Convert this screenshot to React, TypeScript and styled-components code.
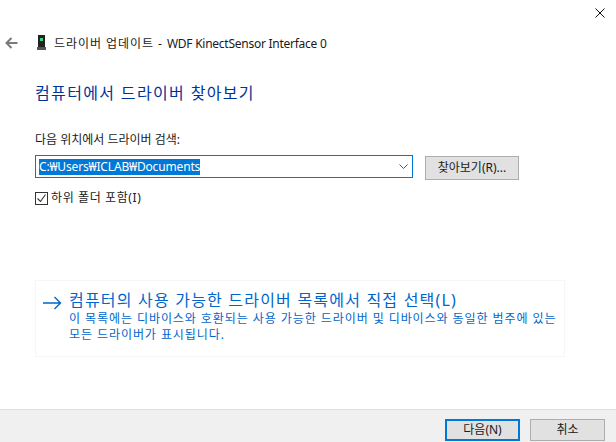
import React from "react";
import styled, { createGlobalStyle } from "styled-components";

const Global = createGlobalStyle`
  html, body { margin: 0; padding: 0; background: #fff; }
  body { font-family: "Noto Sans", "Noto Sans CJK KR", sans-serif; }
`;
const Win = styled.div`
  width: 616px; height: 442px; display: flex; flex-direction: column; background: #fff; overflow: hidden;
`;
const TopBar = styled.div`
  height: 30px; display: flex; justify-content: flex-end; align-items: flex-start; padding: 8px 11px 0 0; box-sizing: border-box;
`;
const Header = styled.div`
  height: 25px; display: flex; align-items: center; padding-left: 5px;
`;
const DeviceWrap = styled.span`
  display: flex; margin-left: 19px; margin-right: 8px;
`;
const WinTitle = styled.span`
  font-size: 12px; color: #1a1a1a; white-space: nowrap; letter-spacing: 0.95px;
`;
const Latin = styled.span`
  letter-spacing: -0.26px;
`;
const Main = styled.div`
  flex: 1; padding: 26px 51px 0 35px; display: flex; flex-direction: column;
`;
const Heading = styled.h1`
  margin: 0; font-size: 16px; font-weight: 400; line-height: 24px; color: #003399; white-space: nowrap; letter-spacing: 1.35px;
`;
const Label = styled.div`
  margin-top: 26px; font-size: 12px; line-height: 18px; color: #1a1a1a;
`;
const PathRow = styled.div`
  margin-top: 6px; display: flex; align-items: flex-start; gap: 12px;
`;
const Combo = styled.div`
  width: 378px; height: 23px; box-sizing: border-box; border: 1px solid #0078d7; display: flex; align-items: center; justify-content: space-between; padding: 0 4px 0 3px;
`;
const Selected = styled.span`
  background: #0078d7; color: #fff; font-size: 12px; line-height: 16px; white-space: nowrap; letter-spacing: -0.16px;
`;
const Btn = styled.button<{ $primary?: boolean; $w: number; $h: number }>`
  width: ${p => p.$w}px; height: ${p => p.$h}px; box-sizing: border-box; margin: 1px 0 0; padding: 0;
  background: #e1e1e1; color: #1a1a1a; font: inherit; font-size: 12px; line-height: 1;
  border: ${p => (p.$primary ? "2px solid #0078d7" : "1px solid #adadad")};
`;
const CheckRow = styled.label`
  margin-top: 11px; display: flex; align-items: center; gap: 3px; font-size: 12px; line-height: 14px; color: #1a1a1a; letter-spacing: 0.6px;
`;
const Box = styled.span`
  width: 13px; height: 13px; box-sizing: border-box; border: 1px solid #333; display: flex;
`;
const Card = styled.div`
  margin-top: 75px; width: 530px; height: 77px; box-sizing: border-box; border: 1px solid #f6f6f6; padding: 8px 0 0 7px; display: flex; gap: 7px;
`;
const ArrowWrap = styled.span`
  display: flex; padding-top: 7px; flex: none;
`;
const CardText = styled.div`
  display: flex; flex-direction: column;
`;
const CardTitle = styled.div`
  font-size: 16px; line-height: 22px; color: #0066cc; white-space: nowrap; letter-spacing: 1.2px;
`;
const CardDesc = styled.div`
  font-size: 12px; line-height: 16px; color: #0066cc; white-space: nowrap; letter-spacing: 0.93px;
`;
const Footer = styled.div`
  height: 33px; box-sizing: border-box; background: #f0f0f0; border-top: 1px solid #dfdfdf; display: flex; justify-content: flex-end; gap: 10px; padding: 8px 11px 0 0;
`;

export default function App() {
  return (
    <Win>
      <Global />
      <TopBar>
        <svg width="10" height="10" viewBox="0 0 10 10"><path d="M.5.5l9 9M9.5.5l-9 9" stroke="#111" fill="none" /></svg>
      </TopBar>
      <Header>
        <svg width="13" height="12" viewBox="0 0 13 12"><path d="M12.5 6H1.5M6.5 1L1.5 6l5 5" stroke="#7a7a7a" strokeWidth="2" fill="none" /></svg>
        <DeviceWrap>
          <svg width="9" height="15" viewBox="0 0 9 15">
            <rect x="1" y="0" width="7" height="12" fill="#222" />
            <rect x="0" y="12" width="9" height="3" fill="#555" />
            <rect x="3" y="3" width="3" height="3" fill="#3fd27a" />
          </svg>
        </DeviceWrap>
        <WinTitle>드라이버 업데이트 - <Latin>WDF KinectSensor Interface 0</Latin></WinTitle>
      </Header>
      <Main>
        <Heading>컴퓨터에서 드라이버 찾아보기</Heading>
        <Label>다음 위치에서 드라이버 검색:</Label>
        <PathRow>
          <Combo>
            <Selected>C:₩Users₩ICLAB₩Documents</Selected>
            <svg width="9" height="5" viewBox="0 0 9 5"><path d="M.5.5l4 4 4-4" stroke="#555" fill="none" /></svg>
          </Combo>
          <Btn $w={94} $h={24}>찾아보기(R)...</Btn>
        </PathRow>
        <CheckRow>
          <Box>
            <svg width="11" height="11" viewBox="0 0 11 11"><path d="M1.5 5.5l3 3 5-7" stroke="#333" strokeWidth="1.1" fill="none" /></svg>
          </Box>
          하위 폴더 포함(I)
        </CheckRow>
        <Card>
          <ArrowWrap>
            <svg width="19" height="14" viewBox="0 0 19 14"><path d="M0 7h17.5M11.5 1l6 6-6 6" stroke="#0066cc" strokeWidth="1.4" fill="none" /></svg>
          </ArrowWrap>
          <CardText>
            <CardTitle>컴퓨터의 사용 가능한 드라이버 목록에서 직접 선택(L)</CardTitle>
            <CardDesc>이 목록에는 디바이스와 호환되는 사용 가능한 드라이버 및 디바이스와 동일한 범주에 있는<br />모든 드라이버가 표시됩니다.</CardDesc>
          </CardText>
        </Card>
      </Main>
      <Footer>
        <Btn $primary $w={75} $h={22}>다음(N)</Btn>
        <Btn $w={75} $h={22}>취소</Btn>
      </Footer>
    </Win>
  );
}
